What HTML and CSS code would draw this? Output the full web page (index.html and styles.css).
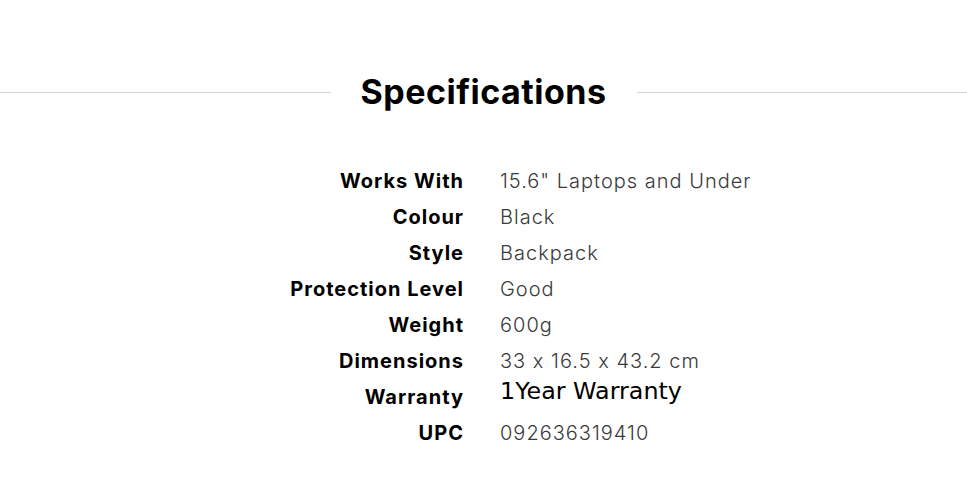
FILE: index.html
```html
<!DOCTYPE html>
<html lang="en">
<head>
<meta charset="utf-8">
<title>Specifications</title>
<link rel="stylesheet" href="styles.css">
</head>
<body>
<section class="specs">
  <div class="specs-heading">
    <span class="rule"></span>
    <h2 class="title">Specifications</h2>
    <span class="rule"></span>
  </div>
  <dl class="spec-table">
    <dt class="label">Works With</dt><dd class="value">15.6" Laptops and Under</dd>
    <dt class="label">Colour</dt><dd class="value">Black</dd>
    <dt class="label">Style</dt><dd class="value">Backpack</dd>
    <dt class="label">Protection Level</dt><dd class="value">Good</dd>
    <dt class="label">Weight</dt><dd class="value">600g</dd>
    <dt class="label">Dimensions</dt><dd class="value">33 x 16.5 x 43.2 cm</dd>
    <dt class="label">Warranty</dt><dd class="value value-alt">1Year Warranty</dd>
    <dt class="label">UPC</dt><dd class="value">092636319410</dd>
  </dl>
</section>
</body>
</html>
```
FILE: styles.css
```css
html, body {
  margin: 0;
  padding: 0;
  background: #ffffff;
}

body {
  font-family: "Inter", "Liberation Sans", sans-serif;
  font-feature-settings: "calt" 0;
  color: #000;
}

.specs {
  padding-top: 69px;
}

.specs-heading {
  display: flex;
  align-items: center;
  gap: 30px;
}

.rule {
  flex: 1;
  height: 1px;
  background: #d2d2d2;
}

.title {
  margin: 0;
  font-size: 34px;
  line-height: 46px;
  font-weight: 700;
  letter-spacing: 0.5px;
  color: #000;
}

.spec-table {
  display: grid;
  grid-template-columns: 1fr 1fr;
  grid-auto-rows: 36px;
  column-gap: 37px;
  margin: 48px 0 0;
  padding-right: 4px;
}

.label {
  margin: 0 -1px 0 0;
  text-align: right;
  font-size: 20px;
  line-height: 36px;
  font-weight: 700;
  letter-spacing: 1px;
  color: #000;
}

.value {
  margin: 0;
  font-size: 20px;
  line-height: 36px;
  font-weight: 300;
  letter-spacing: 1px;
  color: #3a3a3a;
}

.value-alt {
  font-family: "DejaVu Sans", "Open Sans", sans-serif;
  font-size: 23.8px;
  font-weight: 400;
  line-height: 24px;
  letter-spacing: 0;
  color: #000;
}
```
